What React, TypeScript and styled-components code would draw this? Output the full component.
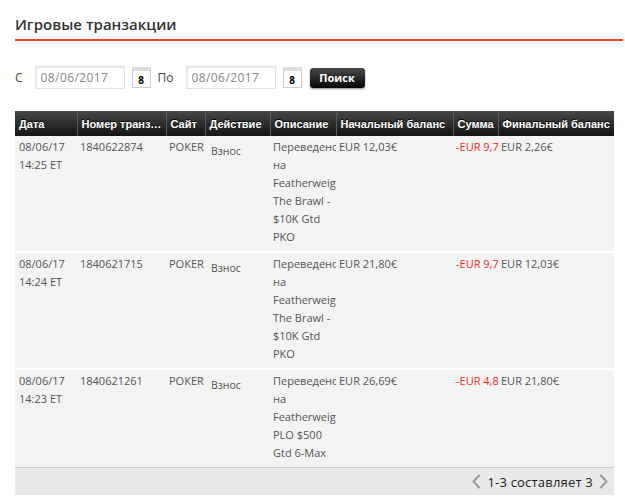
import { createGlobalStyle } from 'styled-components';
import styled from 'styled-components';

const GlobalStyle = createGlobalStyle`
  body {
    margin: 0;
    background: #fff;
    font-family: "Open Sans", "Liberation Sans", sans-serif;
    color: #555;
  }
`;

const Page = styled.div`
  padding: 0 2px 0 15px;
  width: 608px;
`;

const Title = styled.h1`
  margin: 0;
  padding: 14px 0 5px;
  font-size: 15px;
  line-height: 20px;
  font-weight: 600;
  color: #333;
  border-bottom: 2px solid #e04b1b;
`;

const Filters = styled.div`
  display: flex;
  align-items: center;
  margin: 25px 0 22px;
  height: 23px;
  font-size: 12px;
  color: #444;
`;

const Label = styled.span<{ $gap: number }>`
  margin-right: ${({ $gap }) => $gap}px;
`;

const DateInput = styled.input`
  box-sizing: border-box;
  width: 90px;
  height: 23px;
  padding: 0 5px;
  border: 1px solid #e2e2e2;
  box-shadow: inset 1px 1px 2px rgba(0, 0, 0, 0.08);
  font-family: inherit;
  font-size: 12px;
  letter-spacing: 0.4px;
  color: #888;
  outline: none;
`;

const CalButton = styled.div`
  box-sizing: border-box;
  width: 19px;
  height: 21px;
  margin: 0 7px;
  border: 1px solid #ccc;
  border-top: 4px solid #ddd;
  background: #fff;
  display: flex;
  align-items: flex-end;
  justify-content: center;
  font-size: 10px;
  font-weight: 700;
  color: #000;
  line-height: 14px;
`;

const SearchButton = styled.button`
  width: 55px;
  height: 20px;
  margin-left: 1px;
  padding: 0;
  border: none;
  border-radius: 3px;
  background: linear-gradient(#4a4a4a, #050505);
  box-shadow: 0 1px 2px rgba(0, 0, 0, 0.45);
  color: #fff;
  font-family: inherit;
  font-size: 11px;
  font-weight: 700;
`;

const Table = styled.table`
  width: 599px;
  table-layout: fixed;
  border-collapse: collapse;
  font-size: 11px;
`;

const Th = styled.th`
  height: 25px;
  padding: 0 1px 0 4px;
  background: linear-gradient(#464646, #151515);
  border-left: 1px solid #5a5a5a;
  color: #fff;
  font-family: "Liberation Sans", Arial, sans-serif;
  font-size: 11px;
  font-weight: 700;
  text-align: left;
  text-shadow: 0 -1px 0 #000;
  white-space: nowrap;
  overflow: hidden;
  text-overflow: ellipsis;

  &:first-child {
    border-left: none;
  }
`;

const Tr = styled.tr`
  background: #f3f3f3;
  border-bottom: 2px solid #fff;

  &:last-child {
    border-bottom: none;
  }
`;

const Td = styled.td<{ $nowrap?: boolean; $red?: boolean }>`
  padding: 2px 3px 5px 3px;
  vertical-align: top;
  line-height: 18px;
  overflow: hidden;
  white-space: ${({ $nowrap }) => ($nowrap ? 'nowrap' : 'normal')};
  color: ${({ $red }) => ($red ? '#ee2b2b' : '#555')};

  &:first-child {
    padding-left: 4px;
  }
`;

const ActionText = styled.div`
  padding: 4px 0 0 3px;
  font-size: 10.5px;
`;

const Footer = styled.div`
  width: 599px;
  height: 28px;
  box-sizing: border-box;
  border-top: 1px solid #c8c8c8;
  background: #e9e9e9;
  display: flex;
  align-items: center;
  justify-content: flex-end;
  gap: 6px;
  padding-right: 6px;
  font-size: 13px;
  letter-spacing: 0.2px;
  color: #222;
`;

const Chevron = ({ dir }: { dir: 'left' | 'right' }) => (
  <svg width="9" height="15" viewBox="0 0 9 15">
    <polyline
      points={dir === 'left' ? '7.5,1 1.5,7.5 7.5,14' : '1.5,1 7.5,7.5 1.5,14'}
      fill="none"
      stroke="#999"
      strokeWidth="2"
    />
  </svg>
);

const columns = [
  { title: 'Дата', width: 62 },
  { title: 'Номер транзакции', width: 89 },
  { title: 'Сайт', width: 39 },
  { title: 'Действие', width: 65 },
  { title: 'Описание', width: 66 },
  { title: 'Начальный баланс', width: 117 },
  { title: 'Сумма', width: 45 },
  { title: 'Финальный баланс', width: 116 },
];

const rows = [
  {
    date: '08/06/17 14:25 ET',
    id: '1840622874',
    desc: 'Переведено на Featherweight The Brawl - $10K Gtd PKO',
    start: 'EUR 12,03€',
    amount: '-EUR 9,77€',
    end: 'EUR 2,26€',
  },
  {
    date: '08/06/17 14:24 ET',
    id: '1840621715',
    desc: 'Переведено на Featherweight The Brawl - $10K Gtd PKO',
    start: 'EUR 21,80€',
    amount: '-EUR 9,77€',
    end: 'EUR 12,03€',
  },
  {
    date: '08/06/17 14:23 ET',
    id: '1840621261',
    desc: 'Переведено на Featherweight PLO $500 Gtd 6-Max',
    start: 'EUR 26,69€',
    amount: '-EUR 4,89€',
    end: 'EUR 21,80€',
  },
];

export default function App() {
  return (
    <Page>
      <GlobalStyle />
      <Title>Игровые транзакции</Title>

      <Filters>
        <Label $gap={12}>С</Label>
        <DateInput defaultValue="08/06/2017" />
        <CalButton>8</CalButton>
        <Label $gap={12}>По</Label>
        <DateInput defaultValue="08/06/2017" />
        <CalButton>8</CalButton>
        <SearchButton>Поиск</SearchButton>
      </Filters>

      <Table>
        <colgroup>
          {columns.map((c) => (
            <col key={c.title} style={{ width: c.width }} />
          ))}
        </colgroup>
        <thead>
          <tr>
            {columns.map((c) => (
              <Th key={c.title}>{c.title}</Th>
            ))}
          </tr>
        </thead>
        <tbody>
          {rows.map((r) => (
            <Tr key={r.id}>
              <Td>{r.date}</Td>
              <Td>{r.id}</Td>
              <Td>POKER</Td>
              <Td>
                <ActionText>Взнос</ActionText>
              </Td>
              <Td>{r.desc}</Td>
              <Td $nowrap>{r.start}</Td>
              <Td $nowrap $red>
                {r.amount}
              </Td>
              <Td $nowrap>{r.end}</Td>
            </Tr>
          ))}
        </tbody>
      </Table>

      <Footer>
        <Chevron dir="left" />
        <span>1-3 составляет 3</span>
        <Chevron dir="right" />
      </Footer>
    </Page>
  );
}
